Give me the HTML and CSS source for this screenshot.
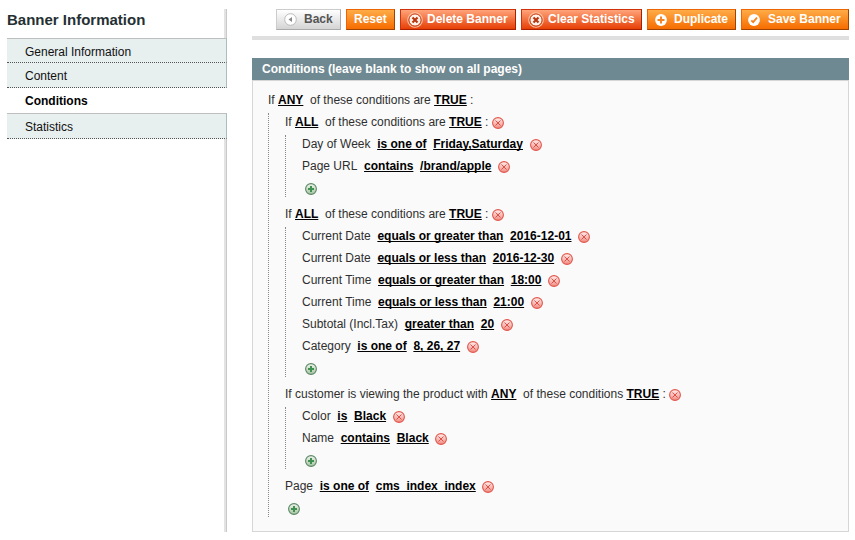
FILE: index.html
```html
<!DOCTYPE html>
<html lang="en">
<head>
<meta charset="utf-8">
<title>Banner Information</title>
<link rel="stylesheet" href="styles.css">
</head>
<body>
<svg class="defs" aria-hidden="true">
  <defs>
    <linearGradient id="red" x1="0" y1="0" x2="0" y2="1"><stop offset="0" stop-color="#fff0ee"/><stop offset="1" stop-color="#f08a80"/></linearGradient>
    <linearGradient id="green" x1="0" y1="0" x2="0" y2="1"><stop offset="0" stop-color="#f1f4f0"/><stop offset="1" stop-color="#a5c3a2"/></linearGradient>
  </defs>
  <symbol id="remove" viewBox="0 0 12 12"><circle cx="6" cy="6" r="5.4" fill="url(#red)" stroke="#e2564c" stroke-width="1.1"/><path d="M3.5 3.5l5 5M8.5 3.5l-5 5" stroke="#dc3c34" stroke-width=".85"/></symbol>
  <symbol id="add" viewBox="0 0 12 12"><circle cx="6" cy="6" r="5.4" fill="url(#green)" stroke="#5c8765" stroke-width="1.1"/><path d="M6 3v6M3 6h6" stroke="#3f9150" stroke-width="2"/></symbol>
  <symbol id="cross" viewBox="0 0 16 16"><circle cx="8" cy="8" r="7.2" fill="none" stroke="#ffc3a5" stroke-width="1.2"/><circle cx="8" cy="8" r="6.1" fill="#fff0e8" stroke="#c23c12" stroke-width="1"/><path d="M5.5 5.5l5 5M10.5 5.5l-5 5" stroke="#b8340e" stroke-width="2.1"/></symbol>
</svg>
<div class="page">
  <aside class="side">
    <h3>Banner Information</h3>
    <ul class="tabs">
      <li class="first">General Information</li>
      <li>Content</li>
      <li class="active">Conditions</li>
      <li class="last">Statistics</li>
    </ul>
  </aside>
  <main class="main">
    <div class="toolbar">
      <button class="btn back"><svg width="13" height="13" viewBox="0 0 13 13"><circle cx="6.5" cy="6.5" r="5.8" fill="#fff" stroke="#bbb"/><path d="M8 4v5L4.5 6.5z" fill="#888"/></svg>Back</button>
      <button class="btn reset">Reset</button>
      <button class="btn danger delete"><svg width="16" height="16"><use href="#cross"/></svg>Delete Banner</button>
      <button class="btn danger clear"><svg width="16" height="16"><use href="#cross"/></svg>Clear Statistics</button>
      <button class="btn duplicate"><svg width="12" height="12" viewBox="0 0 12 12"><circle cx="6" cy="6" r="5.9" fill="#fff"/><path d="M6 2.5v7M2.5 6h7" stroke="#f58220" stroke-width="1.9"/></svg>Duplicate</button>
      <button class="btn save"><svg width="12" height="12" viewBox="0 0 12 12"><circle cx="6" cy="6" r="5.9" fill="#fff"/><path d="M3.3 6.3l1.9 1.9 3.8-4.5" fill="none" stroke="#f58220" stroke-width="1.8"/></svg>Save Banner</button>
    </div>
    <h4>Conditions (leave blank to show on all pages)</h4>
    <section class="rules">
      <p>If <a>ANY</a>&nbsp; of these conditions are <a>TRUE</a> :</p>
      <ul>
        <li><p>If <a>ALL</a>&nbsp; of these conditions are <a>TRUE</a> : <svg class="ico"><use href="#remove"/></svg></p>
          <ul>
            <li><p>Day of Week&nbsp; <a>is one of</a>&nbsp; <a>Friday,Saturday</a>&nbsp; <svg class="ico"><use href="#remove"/></svg></p></li>
            <li><p>Page URL&nbsp; <a>contains</a>&nbsp; <a>/brand/apple</a>&nbsp; <svg class="ico"><use href="#remove"/></svg></p></li>
            <li><p><svg class="ico plus"><use href="#add"/></svg></p></li>
          </ul>
        </li>
        <li><p>If <a>ALL</a>&nbsp; of these conditions are <a>TRUE</a> : <svg class="ico"><use href="#remove"/></svg></p>
          <ul>
            <li><p>Current Date&nbsp; <a>equals or greater than</a>&nbsp; <a>2016-12-01</a>&nbsp; <svg class="ico"><use href="#remove"/></svg></p></li>
            <li><p>Current Date&nbsp; <a>equals or less than</a>&nbsp; <a>2016-12-30</a>&nbsp; <svg class="ico"><use href="#remove"/></svg></p></li>
            <li><p>Current Time&nbsp; <a>equals or greater than</a>&nbsp; <a>18:00</a>&nbsp; <svg class="ico"><use href="#remove"/></svg></p></li>
            <li><p>Current Time&nbsp; <a>equals or less than</a>&nbsp; <a>21:00</a>&nbsp; <svg class="ico"><use href="#remove"/></svg></p></li>
            <li><p>Subtotal (Incl.Tax)&nbsp; <a>greater than</a>&nbsp; <a>20</a>&nbsp; <svg class="ico"><use href="#remove"/></svg></p></li>
            <li><p>Category&nbsp; <a>is one of</a>&nbsp; <a>8, 26, 27</a>&nbsp; <svg class="ico"><use href="#remove"/></svg></p></li>
            <li><p><svg class="ico plus"><use href="#add"/></svg></p></li>
          </ul>
        </li>
        <li><p>If customer is viewing the product with <a>ANY</a>&nbsp; of these conditions <a>TRUE</a> : <svg class="ico"><use href="#remove"/></svg></p>
          <ul>
            <li><p>Color&nbsp; <a>is</a>&nbsp; <a>Black</a>&nbsp; <svg class="ico"><use href="#remove"/></svg></p></li>
            <li><p>Name&nbsp; <a>contains</a>&nbsp; <a>Black</a>&nbsp; <svg class="ico"><use href="#remove"/></svg></p></li>
            <li><p><svg class="ico plus"><use href="#add"/></svg></p></li>
          </ul>
        </li>
        <li><p>Page&nbsp; <a>is one of</a>&nbsp; <a>cms_index_index</a>&nbsp; <svg class="ico"><use href="#remove"/></svg></p></li>
        <li><p><svg class="ico plus"><use href="#add"/></svg></p></li>
      </ul>
    </section>
  </main>
</div>
</body>
</html>
```
FILE: styles.css
```css
* { box-sizing: border-box; margin: 0; padding: 0; }
body { background: #fff; font: 12px/18px "Liberation Sans", Arial, sans-serif; color: #2f2f2f; overflow: hidden; }
ul { list-style: none; }
.defs { position: absolute; width: 0; height: 0; }
.page { display: flex; gap: 25px; padding: 9px 6px 8px 7px; height: 540px; }

.side { width: 220px; background: linear-gradient(to right, #e3e3e3 2px, #c9c9c9 2px) right / 3px 100% no-repeat; }
.side h3 { height: 29px; font-size: 15px; line-height: 22px; color: #253033; }
.tabs li { height: 25px; padding: 4px 18px 0; background: #e7efef; border-right: 1px solid #a9bfbf; border-bottom: 1px dotted #555; color: #111; }
.tabs .first { border-top: 1px solid #bebebe; }
.tabs .active { height: 25px; background: #fff; border-color: #fff; border-bottom: 0; font-weight: bold; color: #000; }
.tabs .last { height: 26px; border-top: 1px solid #bebebe; }

.main { flex: 1; display: flex; flex-direction: column; }
.toolbar { display: flex; justify-content: flex-end; gap: 5px; height: 31px; border-bottom: 4px solid #dfdfdf; margin-bottom: 18px; }
.btn { display: flex; align-items: center; height: 21px; padding: 0 7px 1px; border: 1px solid; border-color: #ed6502 #a04300 #a04300 #ed6502; background: linear-gradient(#ffac47, #f66c00); color: #fff; font: bold 12px "Liberation Sans", Arial, sans-serif; white-space: nowrap; }
.btn svg { flex: none; margin-top: 1px; }
.back { width: 65px; border-color: #ccc #aaa #aaa #ccc; background: linear-gradient(#fff, #d4d4d4); color: #555; }
.back svg { margin-right: 7px; }
.reset { width: 49px; }
.danger { border-color: #d1310a #a92000 #a92000 #d1310a; background: linear-gradient(#ffa47a, #e63f05); }
.danger svg { margin: 1px 4px 0 -1px; }
.delete { width: 116px; }
.clear { width: 121px; }
.duplicate { width: 89px; }
.save { width: 108px; }
.duplicate svg { margin-right: 7px; }
.save svg { margin: 1px 8px 0 -1px; }

h4 { height: 22px; padding-left: 10px; background: #6f8992; color: #fff; font-size: 12px; line-height: 22px; }
.rules { flex: 1; min-height: 0; padding: 10px 15px; background: #fafafa; border: 1px solid #d6d6d6; }
.rules p { height: 18px; white-space: nowrap; }
.rules ul { margin-top: 4px; padding-left: 16px; border-left: 1px dotted #888; }
.rules li + li { margin-top: 4px; }
.rules ul ul { margin-bottom: 8px; }
.rules a { font-weight: bold; color: #000; text-decoration: underline; text-decoration-skip-ink: none; }
.ico { width: 12px; height: 12px; vertical-align: -3px; }
.plus { margin-left: 3px; }
```
